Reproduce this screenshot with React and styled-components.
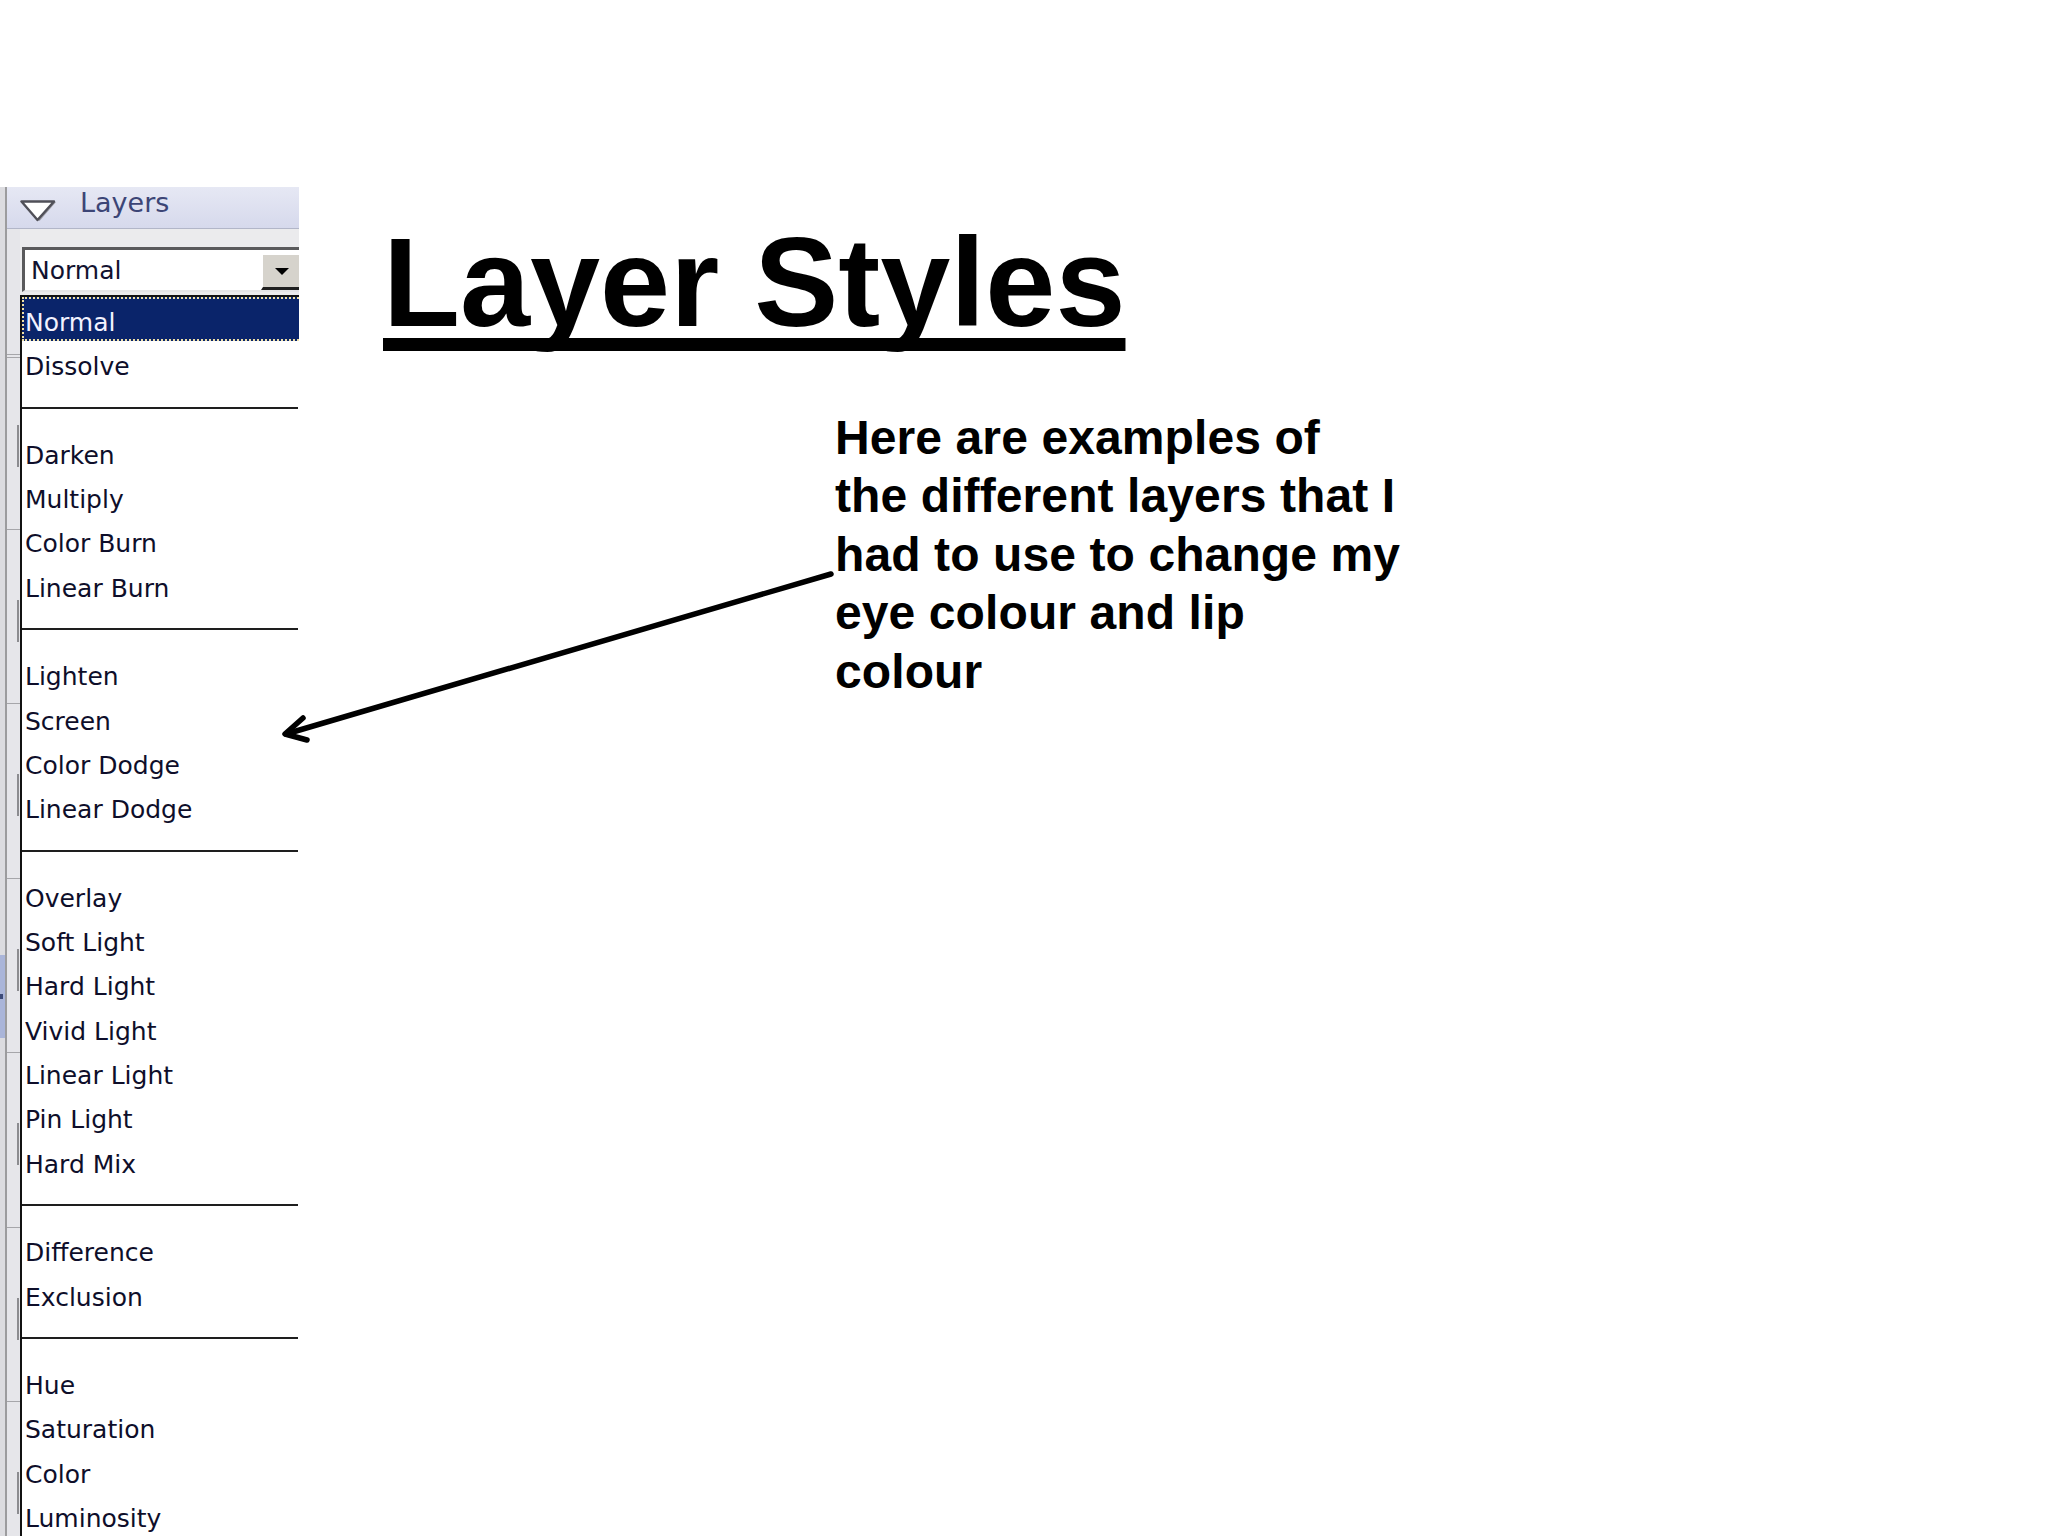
import React from "react";
import styled, { createGlobalStyle } from "styled-components";

const GlobalStyle = createGlobalStyle`
  html, body {
    margin: 0;
    padding: 0;
    background: #ffffff;
  }
`;

const blendModes = [
  ["Normal", "Dissolve"],
  ["Darken", "Multiply", "Color Burn", "Linear Burn"],
  ["Lighten", "Screen", "Color Dodge", "Linear Dodge"],
  ["Overlay", "Soft Light", "Hard Light", "Vivid Light", "Linear Light", "Pin Light", "Hard Mix"],
  ["Difference", "Exclusion"],
  ["Hue", "Saturation", "Color", "Luminosity"],
];

const Page = styled.div`
  position: relative;
  width: 2048px;
  height: 1536px;
  overflow: hidden;
  display: flex;
  flex-flow: row nowrap;
  align-items: flex-start;
  background: #ffffff;
`;

/* ---------- left layers palette ---------- */

const Palette = styled.div`
  margin-top: 187px;
  width: 299px;
  height: 1349px;
  display: flex;
  flex-flow: row nowrap;
  overflow: hidden;
  flex-shrink: 0;
`;

const DockEdge = styled.div`
  width: 5px;
  flex-shrink: 0;
  background: #dcdce0;
  border-right: 2px solid #9c9c9e;
  display: flex;
  flex-flow: column nowrap;
`;

const DockTab = styled.div`
  margin-top: 768px;
  height: 83px;
  background: #aab5d9;
  display: flex;
  align-items: center;
`;

const DockTabMark = styled.div`
  width: 3px;
  height: 5px;
  background: #3c4a78;
`;

const PaletteBody = styled.div`
  flex: 1;
  display: flex;
  flex-flow: column nowrap;
  background: #ebebed;
`;

const Header = styled.div`
  height: 41px;
  flex-shrink: 0;
  display: flex;
  flex-flow: row nowrap;
  align-items: flex-start;
  background: linear-gradient(#e6e8f4, #d6d9ec);
  border-bottom: 1px solid #b2b6c8;
`;

const CollapseIcon = styled.svg`
  margin: 13px 0 0 13px;
  flex-shrink: 0;
`;

const HeaderTitle = styled.div`
  margin: 2px 0 0 22px;
  font-family: "DejaVu Sans", Tahoma, sans-serif;
  font-size: 27px;
  line-height: 27px;
  color: #3c4576;
`;

const PaletteContent = styled.div`
  flex: 1;
  display: flex;
  flex-flow: row nowrap;
`;

const Gutter = styled.div`
  width: 13px;
  flex-shrink: 0;
  display: flex;
  flex-flow: column nowrap;
  background: #e6e6ea;
`;

const GutterLead = styled.div`
  height: 125px;
  flex-shrink: 0;
`;

const GutterCell = styled.div`
  height: 174.5px;
  flex-shrink: 0;
  box-sizing: border-box;
  padding-top: ${(p) => (p.$first ? "67px" : "70px")};
  border-top-color: #a6a6aa;
  border-top-width: ${(p) => (p.$first ? "4px" : "1px")};
  border-top-style: ${(p) => (p.$first ? "double" : "solid")};
`;

const GutterBar = styled.div`
  margin-left: 10px;
  width: 2px;
  height: 42px;
  background: #8c8c90;
`;

const Main = styled.div`
  flex: 1;
  display: flex;
  flex-flow: column nowrap;
`;

const SelectBox = styled.div`
  margin: 18px 0 0 2px;
  width: 300px;
  height: 40px;
  display: flex;
  flex-flow: row nowrap;
  align-items: flex-start;
  background: #ffffff;
  border-top: 3px solid #5a5a5c;
  border-left: 3px solid #5a5a5c;
  border-bottom: 2px solid #e4e4e6;
`;

const SelectValue = styled.div`
  flex: 1;
  padding: 2px 0 0 6px;
  font-family: "DejaVu Sans", Tahoma, sans-serif;
  font-size: 25px;
  line-height: 38px;
  color: #121230;
`;

const DropButton = styled.div`
  margin: 3px 0 0 0;
  width: 62px;
  height: 32px;
  flex-shrink: 0;
  display: flex;
  align-items: center;
  background: #d6d3cc;
  border-top: 2px solid #ffffff;
  border-left: 2px solid #ffffff;
  border-bottom: 3px solid #202020;
`;

const DropArrow = styled.div`
  margin-left: 12px;
  width: 0;
  height: 0;
  border-left: 7px solid transparent;
  border-right: 7px solid transparent;
  border-top: 7px solid #000000;
`;

const ListBox = styled.div`
  margin-top: 3px;
  width: 300px;
  flex: 1;
  display: flex;
  flex-flow: column nowrap;
  background: #ffffff;
  border-top: 2px solid #111111;
  border-left: 2px solid #111111;
`;

const ListItem = styled.div`
  height: 44.3px;
  flex-shrink: 0;
  box-sizing: border-box;
  padding: 7px 0 0 3px;
  font-family: "DejaVu Sans", Tahoma, sans-serif;
  font-size: 25px;
  line-height: 37.3px;
  white-space: nowrap;
  color: ${(p) => (p.$selected ? "#f2f2ff" : "#0e0e2a")};
  background: ${(p) => (p.$selected ? "#0a246a" : "transparent")};
  outline: ${(p) => (p.$selected ? "2px dotted #eee0a8" : "none")};
  outline-offset: -2px;
`;

const ListSeparator = styled.div`
  height: 44.3px;
  flex-shrink: 0;
  display: flex;
  align-items: center;
`;

const SeparatorLine = styled.div`
  width: 276px;
  height: 2px;
  background: #1e1e1e;
`;

/* ---------- slide content ---------- */

const Slide = styled.div`
  padding: 220px 0 0 84px;
  display: flex;
  flex-flow: column nowrap;
  align-items: flex-start;
`;

const Title = styled.h1`
  margin: 0;
  font-family: "Liberation Sans", Arial, sans-serif;
  font-weight: 700;
  font-size: 126px;
  line-height: 126px;
  color: #000000;
  text-decoration: underline;
  text-decoration-thickness: 13px;
  text-underline-offset: 12px;
  text-decoration-skip-ink: none;
  white-space: nowrap;
`;

const Caption = styled.p`
  margin: 63px 0 0 452px;
  font-family: "Liberation Sans", Arial, sans-serif;
  font-weight: 700;
  font-size: 48px;
  line-height: 58.4px;
  letter-spacing: 0.1px;
  color: #000000;
  white-space: nowrap;
`;

const Pointer = styled.svg`
  position: absolute;
  left: 0;
  top: 0;
  pointer-events: none;
`;

const LayersPalette = () => {
  const gutterCells = [0, 1, 2, 3, 4, 5, 6];
  return (
    <Palette>
      <DockEdge>
        <DockTab>
          <DockTabMark />
        </DockTab>
      </DockEdge>
      <PaletteBody>
        <Header>
          <CollapseIcon width="38" height="23" viewBox="0 0 38 23">
            <path d="M3 2 L36 2 L19.5 21 Z" fill="#9a9aa2" />
            <path d="M1.5 1.5 L34 1.5 L17.5 20 Z" fill="#ffffff" stroke="#505058" strokeWidth="2.4" strokeLinejoin="round" />
          </CollapseIcon>
          <HeaderTitle>Layers</HeaderTitle>
        </Header>
        <PaletteContent>
          <Gutter>
            <GutterLead />
            {gutterCells.map((i) => (
              <GutterCell key={i} $first={i === 0}>
                <GutterBar />
              </GutterCell>
            ))}
          </Gutter>
          <Main>
            <SelectBox>
              <SelectValue>Normal</SelectValue>
              <DropButton>
                <DropArrow />
              </DropButton>
            </SelectBox>
            <ListBox>
              {blendModes.map((group, gi) => (
                <React.Fragment key={gi}>
                  {group.map((mode, mi) => (
                    <ListItem key={mode} $selected={gi === 0 && mi === 0}>
                      {mode}
                    </ListItem>
                  ))}
                  {gi < blendModes.length - 1 && (
                    <ListSeparator>
                      <SeparatorLine />
                    </ListSeparator>
                  )}
                </React.Fragment>
              ))}
            </ListBox>
          </Main>
        </PaletteContent>
      </PaletteBody>
    </Palette>
  );
};

const App = () => {
  return (
    <>
      <GlobalStyle />
      <Page>
        <LayersPalette />
        <Slide>
          <Title>Layer Styles</Title>
          <Caption>
            Here are examples of
            <br />
            the different layers that I
            <br />
            had to use to change my
            <br />
            eye colour and lip
            <br />
            colour
          </Caption>
        </Slide>
        <Pointer width="2048" height="1536" viewBox="0 0 2048 1536">
          <g stroke="#000000" strokeWidth="5.5" strokeLinecap="round" fill="none">
            <line x1="831" y1="574" x2="286" y2="734" />
            <polyline points="303,718 285,734 307,740" strokeLinejoin="round" />
          </g>
        </Pointer>
      </Page>
    </>
  );
};

export default App;
